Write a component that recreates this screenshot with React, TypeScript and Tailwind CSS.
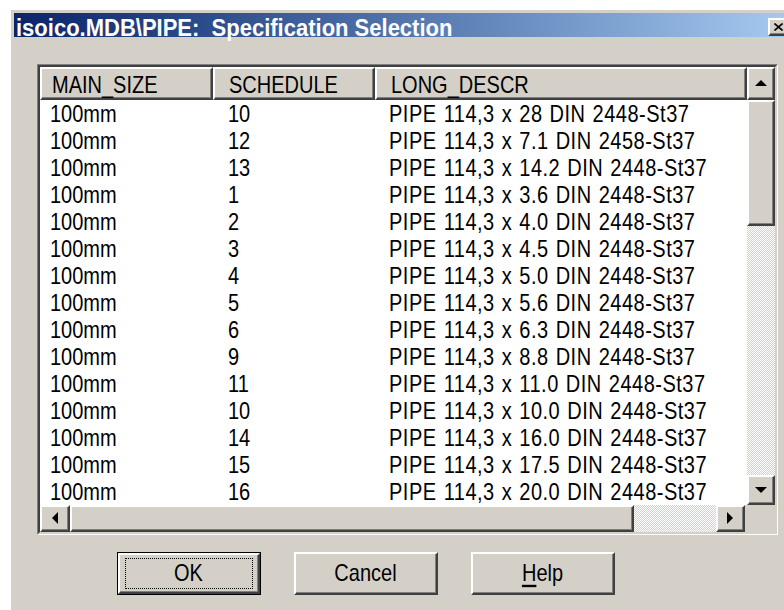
import type { ReactNode } from 'react';

const ROWS: [string, string, string][] = [
  ['100mm', '10', 'PIPE 114,3 x 28 DIN 2448-St37'],
  ['100mm', '12', 'PIPE 114,3 x 7.1 DIN 2458-St37'],
  ['100mm', '13', 'PIPE 114,3 x 14.2 DIN 2448-St37'],
  ['100mm', '1', 'PIPE 114,3 x 3.6 DIN 2448-St37'],
  ['100mm', '2', 'PIPE 114,3 x 4.0 DIN 2448-St37'],
  ['100mm', '3', 'PIPE 114,3 x 4.5 DIN 2448-St37'],
  ['100mm', '4', 'PIPE 114,3 x 5.0 DIN 2448-St37'],
  ['100mm', '5', 'PIPE 114,3 x 5.6 DIN 2448-St37'],
  ['100mm', '6', 'PIPE 114,3 x 6.3 DIN 2448-St37'],
  ['100mm', '9', 'PIPE 114,3 x 8.8 DIN 2448-St37'],
  ['100mm', '11', 'PIPE 114,3 x 11.0 DIN 2448-St37'],
  ['100mm', '10', 'PIPE 114,3 x 10.0 DIN 2448-St37'],
  ['100mm', '14', 'PIPE 114,3 x 16.0 DIN 2448-St37'],
  ['100mm', '15', 'PIPE 114,3 x 17.5 DIN 2448-St37'],
  ['100mm', '16', 'PIPE 114,3 x 20.0 DIN 2448-St37'],
];

const COLS = [
  { title: 'MAIN_SIZE', w: 'w-[173px]', pad: 'pl-[10px]' },
  { title: 'SCHEDULE', w: 'w-[162px]', pad: 'pl-[14px]' },
  { title: 'LONG_DESCR', w: 'w-[372px]', pad: 'pl-[14px]' },
];

const dither =
  'bg-[repeating-conic-gradient(#ffffff_0_25%,#d4d0c8_0_50%)] bg-[length:2px_2px]';

// classic 3d raised edge: light top/left, dark bottom/right
function Raised({ className = '', children }: { className?: string; children?: ReactNode }) {
  return (
    <div className={`bg-[#d4d0c8] border-t-2 border-l-2 border-t-white border-l-white border-b-2 border-r-2 border-b-[#404040] border-r-[#404040] ${className}`}>
      <div className="w-full h-full border-b border-r border-b-[#808080] border-r-[#808080] flex items-center justify-center">
        {children}
      </div>
    </div>
  );
}

function Arrow({ dir }: { dir: 'up' | 'down' | 'left' | 'right' }) {
  const pts = {
    up: '6,0 12,6 0,6',
    down: '0,0 12,0 6,6',
    left: '6,0 6,12 0,6',
    right: '0,0 6,6 0,12',
  }[dir];
  const vertical = dir === 'up' || dir === 'down';
  return (
    <svg width={vertical ? 12 : 6} height={vertical ? 6 : 12} viewBox={vertical ? '0 0 12 6' : '0 0 6 12'}>
      <polygon points={pts} fill="#000" />
    </svg>
  );
}

function Tall({ children }: { children: ReactNode }) {
  return <span className="inline-block scale-y-[1.18] whitespace-pre">{children}</span>;
}

function Button({ label, isDefault, hotkey }: { label: string; isDefault?: boolean; hotkey?: boolean }) {
  const text = hotkey ? (
    <Tall>
      <span className="underline underline-offset-[3px]">{label[0]}</span>
      {label.slice(1)}
    </Tall>
  ) : (
    <Tall>{label}</Tall>
  );
  if (isDefault) {
    return (
      <div className="w-[144px] h-[43px] border border-black">
        <Raised className="w-full h-full">
          <div className="w-[128px] h-[31px] border border-dotted border-black flex items-center justify-center text-[20px]">
            {text}
          </div>
        </Raised>
      </div>
    );
  }
  return (
    <Raised className="w-[144px] h-[43px] text-[20px]">{text}</Raised>
  );
}

export default function App() {
  return (
    <div
      className="w-[784px] h-[610px] bg-white overflow-hidden pl-[11px] pt-[10px]"
      style={{ fontFamily: '"Liberation Sans", Arial, sans-serif' }}
    >
      <div className="w-[783px] h-[600px] bg-[#d4d0c8] pl-[3px] pt-[3px] text-black">
        {/* title bar */}
        <div className="w-[777px] h-[24px] bg-gradient-to-r from-[#0a246a] to-[#a6caf0] flex items-center pl-[2px] pr-[2px]">
          <span className="text-white font-bold text-[22px] leading-none whitespace-pre scale-y-[1.1] inline-block translate-y-[3px]">
            {'isoico.MDB\\PIPE:  Specification Selection'}
          </span>
          <Raised className="ml-auto w-[21px] h-[18px] translate-y-[2px]">
            <svg width="9" height="8" viewBox="0 0 9 8">
              <path d="M0.5 0.5 L8.5 7.5 M8.5 0.5 L0.5 7.5" stroke="#000" strokeWidth="1.6" />
            </svg>
          </Raised>
        </div>

        {/* list view */}
        <div className="ml-[23px] mt-[27px] w-[741px] border-t border-l border-t-[#808080] border-l-[#808080] border-b border-r border-b-white border-r-white">
          <div className="border-t-2 border-l-2 border-t-[#404040] border-l-[#404040] border-b-2 border-r-2 border-b-[#d4d0c8] border-r-[#d4d0c8] bg-white">
            <div className="flex">
              <div className="w-[707px]">
                <div className="flex h-[33px]">
                  {COLS.map((c) => (
                    <Raised key={c.title} className={`${c.w} h-full`}>
                      <div className={`w-full text-[20px] pt-[3px] ${c.pad}`}>
                        <Tall>{c.title}</Tall>
                      </div>
                    </Raised>
                  ))}
                </div>
                <div className="h-[405px]">
                  {ROWS.map((r, i) => (
                    <div key={i} className="flex h-[27px] items-center text-[20px] leading-[27px] pt-[1px]">
                      <div className={`${COLS[0].w} ${COLS[0].pad}`}>
                        <Tall>{r[0]}</Tall>
                      </div>
                      <div className={`${COLS[1].w} pl-[15px]`}>
                        <Tall>{r[1]}</Tall>
                      </div>
                      <div className={`${COLS[2].w} ${COLS[2].pad} tracking-[0.5px] [word-spacing:1px]`}>
                        <Tall>{r[2]}</Tall>
                      </div>
                    </div>
                  ))}
                </div>
              </div>

              {/* vertical scrollbar */}
              <div className="w-[28px] flex flex-col">
                <Raised className="h-[33px]">
                  <Arrow dir="up" />
                </Raised>
                <Raised className="h-[126px]" />
                <div className={`flex-1 ${dither}`} />
                <Raised className="h-[30px]">
                  <Arrow dir="down" />
                </Raised>
              </div>
            </div>

            {/* horizontal scrollbar */}
            <div className="flex h-[27px]">
              <Raised className="w-[30px]">
                <Arrow dir="left" />
              </Raised>
              <Raised className="w-[564px]" />
              <div className={`w-[82px] ${dither}`} />
              <Raised className="w-[29px]">
                <Arrow dir="right" />
              </Raised>
              <div className="flex-1 bg-[#d4d0c8]" />
            </div>
          </div>
        </div>

        {/* buttons */}
        <div className="flex gap-[33px] ml-[103px] mt-[17px]">
          <Button label="OK" isDefault />
          <Button label="Cancel" />
          <Button label="Help" hotkey />
        </div>
      </div>
    </div>
  );
}
